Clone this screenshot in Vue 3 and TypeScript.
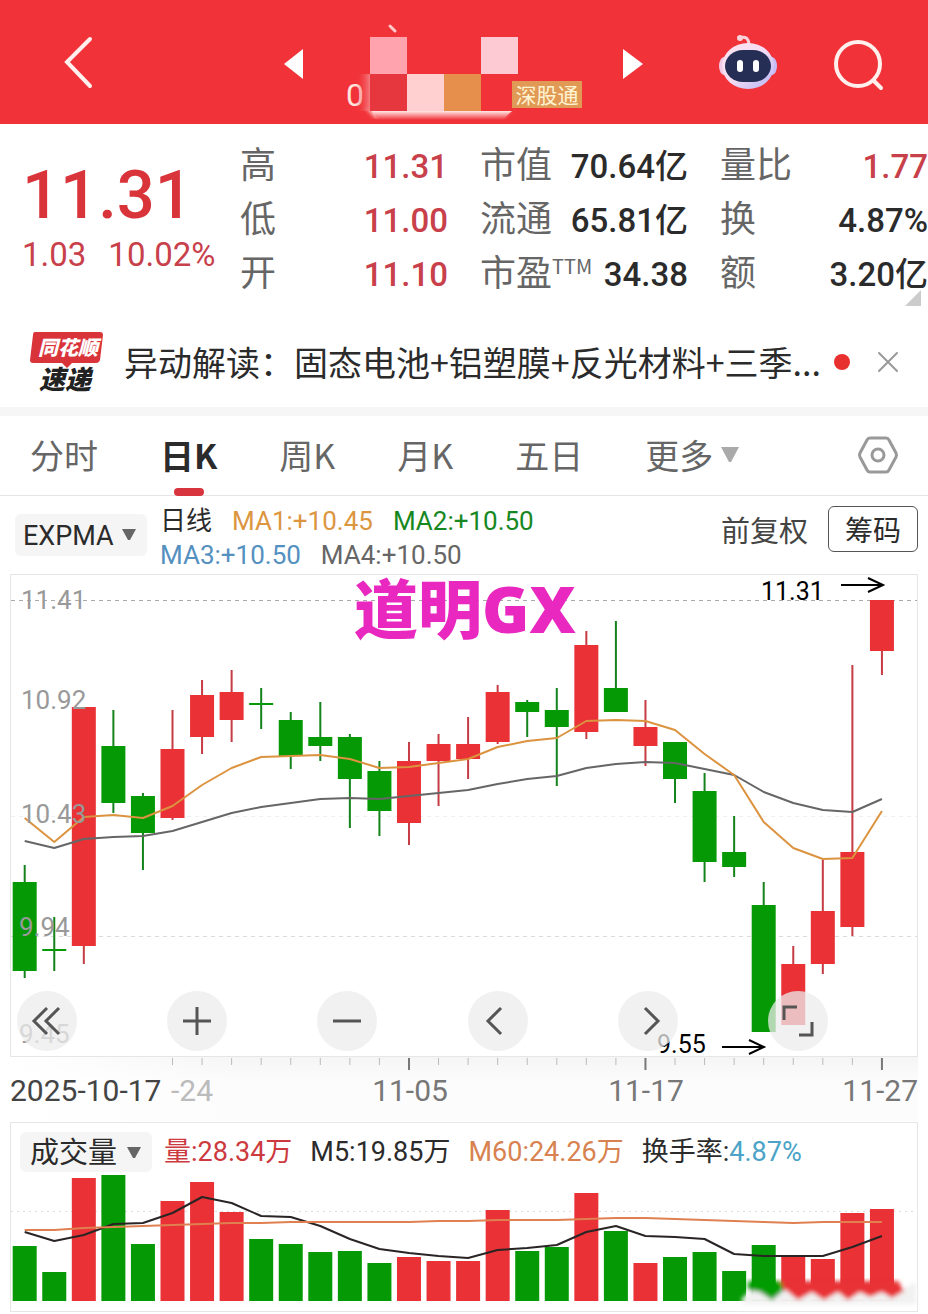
<script setup lang="ts">
import { ref } from 'vue'

type Candle = [dir: 'up' | 'down', high: number, top: number, bottom: number, low: number]

const step = 29.56
const firstX = 24.7
const cx = (i: number): number => firstX + i * step

const candles: Candle[] = [
  ['down', 865, 882, 971, 978],
  ['down', 917, 949, 951, 971],
  ['up', 707, 707, 946, 964],
  ['down', 710, 746, 803, 813],
  ['down', 793, 796, 833, 870],
  ['up', 710, 749, 818, 820],
  ['up', 680, 695, 737, 754],
  ['up', 670, 692, 720, 742],
  ['down', 688, 703, 705, 729],
  ['down', 712, 720, 756, 769],
  ['down', 702, 737, 746, 761],
  ['down', 734, 737, 779, 828],
  ['down', 761, 771, 811, 836],
  ['up', 742, 761, 823, 845],
  ['up', 734, 744, 761, 806],
  ['up', 717, 744, 759, 779],
  ['up', 685, 692, 742, 744],
  ['down', 700, 702, 712, 737],
  ['down', 688, 710, 727, 786],
  ['up', 631, 645, 732, 739],
  ['down', 621, 688, 712, 712],
  ['up', 700, 727, 746, 766],
  ['down', 742, 742, 779, 803],
  ['down', 773, 791, 862, 882],
  ['down', 816, 852, 867, 877],
  ['down', 882, 905, 1032, 1032],
  ['up', 946, 964, 1025, 1025],
  ['up', 860, 911, 964, 974],
  ['up', 665, 852, 927, 936],
  ['up', 600, 600, 651, 675],
]

const fastLine = [818, 842, 817, 815, 818, 806, 785, 768, 757, 756, 755, 759, 768, 767, 763, 759, 747, 741, 738, 721, 720, 721, 730, 754, 775, 822, 848, 859, 858, 811]
const slowLine = [841, 848, 839, 837, 836, 831, 822, 813, 807, 803, 799, 798, 799, 796, 793, 790, 784, 779, 776, 768, 764, 762, 763, 769, 775, 792, 803, 810, 812, 799]

const volumeTops = [1246, 1272, 1178, 1175, 1244, 1201, 1182, 1212, 1239, 1244, 1252, 1251, 1263, 1257, 1261, 1261, 1210, 1251, 1247, 1193, 1231, 1263, 1257, 1252, 1271, 1245, 1256, 1259, 1213, 1209]
const volumeM5 = [1232, 1241, 1235, 1224, 1223, 1213, 1197, 1203, 1216, 1217, 1226, 1239, 1249, 1253, 1256, 1258, 1250, 1248, 1245, 1232, 1226, 1236, 1237, 1239, 1254, 1256, 1256, 1256, 1247, 1236]
const volumeM60 = [1230, 1230, 1228, 1227, 1226, 1225, 1224, 1223, 1223, 1222, 1222, 1222, 1222, 1222, 1221, 1221, 1220, 1220, 1220, 1219, 1218, 1218, 1219, 1220, 1221, 1222, 1223, 1222, 1222, 1222]

const points = (values: number[]): string => values.map((y, i) => `${cx(i)},${y}`).join(' ')

const ticks = Array.from({ length: 25 }, (_, i) => i + 5).map((i) => ({
  x: cx(i),
  major: i === 13 || i === 21 || i === 29,
}))

const stats = [
  [
    { label: '高', value: '11.31', red: true },
    { label: '低', value: '11.00', red: true },
    { label: '开', value: '11.10', red: true },
  ],
  [
    { label: '市值', value: '70.64亿', red: false },
    { label: '流通', value: '65.81亿', red: false },
    { label: '市盈', sup: 'TTM', value: '34.38', red: false },
  ],
  [
    { label: '量比', value: '1.77', red: true },
    { label: '换', value: '4.87%', red: false },
    { label: '额', value: '3.20亿', red: false },
  ],
]

const tabs = ['分时', '日K', '周K', '月K', '五日']
const activeTab = ref('日K')
const indicator = ref('EXPMA')
const subIndicator = ref('成交量')
</script>

<template>
  <main class="page">
    <header class="topbar">
      <button class="icon-btn back" aria-label="返回">
        <svg width="36" height="56" viewBox="0 0 36 56"><path d="M30 5 7 28 30 52" /></svg>
      </button>
      <div class="switcher">
        <button class="icon-btn" aria-label="上一只">
          <svg width="20" height="30" viewBox="0 0 20 30"><path class="solid" d="M1 15 20 0V30Z" /></svg>
        </button>
        <div class="stock">
          <svg class="mosaic" width="164" height="100" viewBox="348 24 164 100">
            <defs>
              <linearGradient id="fade" x1="0" y1="0" x2="0" y2="1">
                <stop offset="0" stop-color="#ffe9e7" />
                <stop offset="1" stop-color="#f13239" />
              </linearGradient>
              <linearGradient id="smear" x1="0" y1="0" x2="1" y2="0">
                <stop offset="0" stop-color="#f13239" stop-opacity="0" />
                <stop offset="1" stop-color="#f47c80" />
              </linearGradient>
              <filter id="soft"><feGaussianBlur stdDeviation="2" /></filter>
            </defs>
            <path class="mark" d="M390 26 395 31" />
            <text class="code" x="346" y="106">0</text>
            <path d="M366 108H512L502 118H376Z" fill="#ffdedb" filter="url(#soft)" />
            <rect x="356" y="74" width="14" height="37" fill="url(#smear)" />
            <rect x="370" y="37" width="37" height="37" fill="#ffa3ae" />
            <rect x="407" y="37" width="74" height="37" fill="#f13239" />
            <rect x="481" y="37" width="37" height="37" fill="#fdc9d2" />
            <rect x="370" y="74" width="37" height="37" fill="#e6373f" />
            <rect x="407" y="74" width="37" height="37" fill="#ffd0cf" />
            <rect x="444" y="74" width="37" height="37" fill="#e68f4c" />
            <rect x="481" y="74" width="33" height="37" fill="#f13239" />
            <path d="M372 111H512L502 120H378Z" fill="url(#fade)" />
          </svg>
          <span class="market">深股通</span>
        </div>
        <button class="icon-btn" aria-label="下一只">
          <svg width="20" height="30" viewBox="0 0 20 30"><path class="solid" d="M20 15 0 0V30Z" /></svg>
        </button>
      </div>
      <button class="icon-btn robot" aria-label="智能助手">
        <svg width="60" height="60" viewBox="0 0 60 60">
          <defs>
            <linearGradient id="shell" x1="0" y1="0" x2="1" y2="1">
              <stop offset="0" stop-color="#ffe3ee" />
              <stop offset=".5" stop-color="#f3dcf4" />
              <stop offset="1" stop-color="#b4b3f5" />
            </linearGradient>
          </defs>
          <path d="M22 6Q30 3 31 12" fill="none" stroke="#f9d3dc" stroke-width="3" />
          <circle cx="22" cy="6" r="3" fill="#f9d3dc" />
          <ellipse cx="6" cy="34" rx="5" ry="9" fill="#f0c9e4" />
          <ellipse cx="54" cy="34" rx="5" ry="9" fill="#c9bdf5" />
          <ellipse cx="30" cy="34" rx="26" ry="23" fill="url(#shell)" />
          <rect x="7" y="18" width="46" height="32" rx="18" fill="#252f55" />
          <rect x="19" y="28" width="6" height="12" rx="3" fill="#fff" />
          <rect x="35" y="28" width="6" height="12" rx="3" fill="#fff" />
        </svg>
      </button>
      <button class="icon-btn search" aria-label="搜索">
        <svg width="50" height="50" viewBox="0 0 50 50">
          <circle cx="23" cy="24" r="22" /><path d="M39 41 46 48" />
        </svg>
      </button>
    </header>

    <section class="quote">
      <div class="price">
        <strong>11.31</strong>
        <p><span>1.03</span><span>10.02%</span></p>
      </div>
      <dl v-for="(group, g) in stats" :key="g" class="stats">
        <div v-for="item in group" :key="item.label">
          <dt>{{ item.label }}<sup v-if="item.sup">{{ item.sup }}</sup></dt>
          <dd :class="{ red: item.red }">{{ item.value }}</dd>
        </div>
      </dl>
      <svg class="corner" width="16" height="16" viewBox="0 0 16 16"><path d="M16 0V16H0Z" fill="#ccc" /></svg>
    </section>

    <section class="news">
      <svg class="brand" width="74" height="62" viewBox="0 0 74 62">
        <path d="M5 1H70Q73 1 73 4L70 29Q69 32 66 32H42L37 37 32 32H3Q0 32 0 29L3 4Q3 1 5 1Z" fill="#da343b" />
        <text x="8" y="24" class="brand-a">同花顺</text>
        <text x="9" y="58" class="brand-b">速递</text>
      </svg>
      <a href="#" class="headline">异动解读：固态电池+铝塑膜+反光材料+三季...</a>
      <span class="dot"></span>
      <button class="icon-btn close" aria-label="关闭">
        <svg width="22" height="22" viewBox="0 0 22 22"><path d="M2 2 20 20M20 2 2 20" /></svg>
      </button>
    </section>

    <nav class="tabs">
      <button v-for="tab in tabs" :key="tab" :class="{ active: tab === activeTab }" @click="activeTab = tab">{{ tab }}</button>
      <button class="more">更多<svg width="18" height="16" viewBox="0 0 18 16"><path d="M0 0H18L10 15H8Z" fill="#aaa" /></svg></button>
      <button class="icon-btn settings" aria-label="设置">
        <svg width="40" height="38" viewBox="0 0 40 38"><path d="M12 2H28Q30 2 31 4L38 17Q39 19 38 21L31 34Q30 36 28 36H12Q10 36 9 34L2 21Q1 19 2 17L9 4Q10 2 12 2Z" /><circle cx="20" cy="19" r="6" /></svg>
      </button>
    </nav>

    <section class="legend">
      <label class="picker">
        <select v-model="indicator" aria-label="主图指标"><option>EXPMA</option></select>
        <svg width="14" height="11" viewBox="0 0 14 11"><path d="M0 0H14L8 11H6Z" fill="#666" /></svg>
      </label>
      <div class="averages">
        <p><span>日线</span><span class="ma1">MA1:+10.45</span><span class="ma2">MA2:+10.50</span></p>
        <p><span class="ma3">MA3:+10.50</span><span class="ma4">MA4:+10.50</span></p>
      </div>
      <button class="adjust">前复权</button>
      <button class="chips">筹码</button>
    </section>

    <section class="chart">
      <svg viewBox="10 574 908 548" role="img" aria-label="日K线图">
        <defs>
          <linearGradient id="axisShade" x1="0" y1="0" x2="0" y2="1">
            <stop offset="0" stop-color="#f5f5f5" />
            <stop offset=".4" stop-color="#fcfcfc" />
            <stop offset="1" stop-color="#fcfcfc" />
          </linearGradient>
          <linearGradient id="axisMask" x1="0" y1="0" x2="1" y2="0">
            <stop offset="0" stop-color="#fff" />
            <stop offset="1" stop-color="#fff" stop-opacity="0" />
          </linearGradient>
        </defs>
        <rect x="10" y="1057" width="908" height="64" fill="url(#axisShade)" />
        <rect x="10" y="1057" width="240" height="64" fill="url(#axisMask)" />
        <rect class="frame" x="10.5" y="574.5" width="907" height="482" />
        <path class="grid strong" d="M11 600.5H917" />
        <path class="grid faint" d="M11 816.5H917" />
        <path class="grid" d="M11 936.5H917" />

        <g v-for="([dir, high, top, bottom, low], i) in candles" :key="i" :class="dir">
          <rect class="wick" :x="cx(i) - 1" :y="high" width="2" :height="low - high" />
          <rect :x="cx(i) - 12" :y="top" width="24" :height="bottom - top" />
        </g>
        <polyline class="slow" :points="points(slowLine)" />
        <polyline class="fast" :points="points(fastLine)" />

        <g class="scale">
          <text x="21" y="609">11.41</text>
          <text x="21" y="709">10.92</text>
          <text x="21" y="823">10.43</text>
          <text x="19" y="936">9.94</text>
          <text x="19" y="1043">9.45</text>
        </g>

        <g class="callout">
          <text x="761" y="600">11.31</text>
          <path d="M841 585H883M868 578 883 585 868 592" />
          <text x="657" y="1053">9.55</text>
          <path d="M722 1047H764M749 1040 764 1047 749 1054" />
        </g>
        <text class="title" x="354" y="633">道明<tspan class="latin">GX</tspan></text>

        <path v-for="t in ticks" :key="t.x" :class="['tick', { major: t.major }]" :d="`M${t.x} 1058V${t.major ? 1070 : 1065}`" />
        <g class="dates">
          <text class="start" x="10" y="1101">2025-10-17</text>
          <text class="ghost" x="171" y="1101">-24</text>
          <text x="410" y="1101" text-anchor="middle">11-05</text>
          <text x="646" y="1101" text-anchor="middle">11-17</text>
          <text x="918" y="1101" text-anchor="end">11-27</text>
        </g>
      </svg>
      <div class="tools">
        <button aria-label="最早"><svg viewBox="0 0 30 30"><path d="M15 2 2 15 15 28M27 2 14 15 27 28" /></svg></button>
        <button aria-label="放大"><svg viewBox="0 0 30 30"><path d="M15 1V29M1 15H29" /></svg></button>
        <button aria-label="缩小"><svg viewBox="0 0 30 30"><path d="M1 15H29" /></svg></button>
        <button aria-label="向左"><svg viewBox="0 0 30 30"><path d="M18 2 5 15 18 28" /></svg></button>
        <button aria-label="向右"><svg viewBox="0 0 30 30"><path d="M12 2 25 15 12 28" /></svg></button>
        <button aria-label="全屏"><svg viewBox="0 0 30 30"><path d="M1 14V1H14M16 29H29V16" /></svg></button>
      </div>
    </section>

    <section class="volume">
      <div class="volume-head">
        <label class="picker">
          <select v-model="subIndicator" aria-label="副图指标"><option>成交量</option></select>
          <svg width="14" height="11" viewBox="0 0 14 11"><path d="M0 0H14L8 11H6Z" fill="#666" /></svg>
        </label>
        <span class="v-now">量:28.34万</span>
        <span>M5:19.85万</span>
        <span class="v-m60">M60:24.26万</span>
        <span>换手率:<b>4.87%</b></span>
      </div>
      <svg viewBox="11 1172 906 139" role="img" aria-label="成交量图">
        <defs><filter id="haze"><feGaussianBlur stdDeviation="2" /></filter></defs>
        <path class="grid dotted" d="M11 1211.5H917" />
        <rect v-for="(y, i) in volumeTops" :key="i" :class="candles[i][0]" :x="cx(i) - 12" :y="y" width="24" :height="1301 - y" />
        <polyline class="m5" :points="points(volumeM5)" />
        <polyline class="m60" :points="points(volumeM60)" />
        <g filter="url(#haze)">
          <path d="M742 1304V1298L752 1290H900L916 1282V1304Z" fill="#f1f1f1" />
          <path d="M748 1281H782L783 1291 772 1300 760 1292 748 1290Z" fill="#059c05" />
          <path d="M780 1281H898L904 1291 892 1298 882 1292 870 1297 860 1292 848 1300 838 1292 824 1300 812 1292 798 1300 786 1290Z" fill="#e83035" />
          <path d="M742 1304 750 1293 762 1295 768 1304Z" fill="#f1f1f1" />
        </g>
      </svg>
    </section>
  </main>
</template>

<style>
body {
  margin: 0;
  background: #fff;
}
</style>

<style scoped>
.page {
  font-family: 'Noto Sans CJK SC', 'Noto Sans', sans-serif;
  color: #2b2b2b;
  background: #fff;
  overflow: hidden;
}
.price,
.stats dd,
.picker,
.averages,
.brand,
.chart,
.code,
.volume-head {
  font-family: Roboto, 'Noto Sans CJK SC', sans-serif;
}
button,
select {
  font: inherit;
  color: inherit;
  border: 0;
  padding: 0;
  margin: 0;
  background: none;
}
p,
dl,
dd {
  margin: 0;
}
svg {
  display: block;
  flex: none;
  overflow: visible;
}
.icon-btn svg {
  fill: none;
  stroke: #fff0ee;
  stroke-width: 4;
  stroke-linecap: round;
}
.icon-btn .solid {
  fill: #fff;
  stroke: none;
}
.topbar {
  display: flex;
  align-items: center;
  height: 124px;
  padding: 0 43px 0 60px;
  box-sizing: border-box;
  background: #f13239;
}
.back {
  margin-right: auto;
}
.switcher {
  display: flex;
  align-items: center;
}
.switcher .icon-btn {
  padding-top: 4px;
}
.stock {
  display: flex;
  align-items: flex-end;
  width: 234px;
  height: 124px;
  margin: 0 41px 0 45px;
}
.mark {
  stroke: #ffc9c9;
  stroke-width: 3;
  stroke-linecap: round;
}
.code {
  font-size: 32px;
  fill: #ffe3df;
}
.market {
  flex: none;
  width: 70px;
  margin-bottom: 16px;
  font-size: 21px;
  line-height: 27px;
  text-align: center;
  color: #fff4d2;
  background: #e09a55;
}
.robot {
  margin: 0 57px 0 75px;
}
.robot svg {
  stroke: none;
}
.topbar > .search {
  padding-top: 6px;
}

.quote {
  position: relative;
  display: grid;
  grid-template-columns: 186px 1fr 1fr 1fr;
  column-gap: 32px;
  padding: 11px 0 23px 22px;
}
.price {
  color: #d8343a;
  white-space: nowrap;
}
.price strong {
  display: block;
  padding-top: 20px;
  font-size: 67px;
  font-weight: 500;
  line-height: 80px;
}
.price p {
  display: flex;
  gap: 22px;
  font-size: 33px;
  line-height: 40px;
  color: #c8404a;
}
.stats > div {
  display: flex;
  align-items: baseline;
  justify-content: space-between;
  height: 54px;
  line-height: 54px;
  white-space: nowrap;
}
.stats dt {
  font-size: 36px;
  color: #666;
}
.stats sup {
  font-size: 20px;
  line-height: 20px;
  vertical-align: 12px;
}
.stats dd {
  font-size: 33px;
  font-weight: 500;
}
.stats .red {
  color: #c8404a;
}
.corner {
  position: absolute;
  right: 7px;
  bottom: 14px;
}

.news {
  display: flex;
  align-items: center;
  height: 84px;
  padding: 0 29px 3px 30px;
  border-bottom: 9px solid #f6f6f6;
}
.headline {
  flex: 1;
  margin-left: 20px;
  overflow: hidden;
  font-size: 34px;
  line-height: 52px;
  white-space: nowrap;
  color: #2b2b2b;
  text-decoration: none;
}
.brand-a,
.brand-b {
  font-size: 20px;
  font-weight: 900;
  font-style: italic;
  fill: #fff;
}
.brand-b {
  font-size: 26px;
  fill: #222;
}
.dot {
  width: 16px;
  height: 16px;
  border-radius: 50%;
  background: #e8302f;
}
.close {
  margin-left: 27px;
}
.close svg {
  stroke: #999;
  stroke-width: 2;
}

.tabs {
  display: flex;
  align-items: center;
  gap: 62px;
  height: 77px;
  padding: 0 30px 2px;
  border-bottom: 1px solid #e6e6e6;
  font-size: 34px;
  color: #666;
}
.tabs button {
  position: relative;
  line-height: 48px;
  white-space: nowrap;
}
.tabs .active {
  font-weight: 700;
  color: #2b2b2b;
}
.tabs .active::after {
  content: '';
  position: absolute;
  left: 50%;
  bottom: -17px;
  width: 30px;
  height: 8px;
  margin-left: -15px;
  border-radius: 4px;
  background: #d8343d;
}
.tabs .more {
  display: flex;
  align-items: center;
  gap: 8px;
}
.settings {
  margin-left: auto;
}
.settings svg {
  stroke: #999;
  stroke-width: 3;
}

.legend {
  display: flex;
  align-items: center;
  height: 78px;
  padding: 0 10px 0 15px;
  white-space: nowrap;
}
.picker {
  position: relative;
  flex: none;
}
.picker select {
  display: block;
  width: 132px;
  height: 42px;
  padding: 2px 0 0 8px;
  border-radius: 6px;
  appearance: none;
  font-size: 27px;
  background: #f5f5f5;
}
.picker svg {
  position: absolute;
  right: 11px;
  top: 15px;
  pointer-events: none;
}
.averages {
  margin: 0 auto 0 13px;
  padding-top: 6px;
  font-size: 26px;
  line-height: 34px;
}
.averages p {
  display: flex;
  gap: 20px;
}
.ma1 {
  color: #dc963f;
}
.ma2 {
  color: #16881f;
}
.ma3 {
  color: #5490c0;
}
.ma4 {
  color: #666;
}
.adjust,
.chips {
  margin-bottom: 12px;
}
.adjust {
  margin-right: 20px;
  font-size: 29px;
  line-height: 44px;
  color: #444;
}
.chips {
  width: 90px;
  height: 46px;
  border: 1px solid #555;
  border-radius: 6px;
  font-size: 28px;
  line-height: 40px;
}

.chart {
  position: relative;
  margin: 0 10px;
}
.chart > svg,
.volume > svg {
  width: 100%;
}
.frame {
  fill: none;
  stroke: #e6e6e6;
}
.grid {
  stroke: #dcdcdc;
  stroke-dasharray: 4 4;
}
.grid.strong {
  stroke: #aaa;
}
.grid.faint {
  stroke: #efefef;
}
.grid.dotted {
  stroke-dasharray: 2 4;
}
.up {
  fill: #e93136;
}
.down {
  fill: #059a05;
}
.up .wick {
  fill: #c63c44;
}
.down .wick {
  fill: #14831b;
}
polyline {
  fill: none;
  stroke-width: 2;
  stroke-linejoin: round;
}
.slow {
  stroke: #666;
}
.fast {
  stroke: #dc933f;
}
.m5 {
  stroke: #2a2424;
}
.m60 {
  stroke: #e08050;
}
.scale {
  font-size: 26px;
  fill: #999;
}
.callout text {
  font-size: 25px;
  fill: #000;
}
.callout path {
  fill: none;
  stroke: #000;
  stroke-width: 2;
}
.title {
  font-size: 64px;
  font-weight: 900;
  fill: #e928c0;
}
.latin {
  font-family: 'Open Sans', Roboto, sans-serif;
  font-weight: 800;
}
.tick {
  stroke: #bbb;
  stroke-width: 1;
}
.tick.major {
  stroke: #777;
  stroke-width: 2;
}
.dates {
  font-size: 30px;
  fill: #777;
}
.dates .start {
  fill: #444;
}
.dates .ghost {
  fill: #bbb;
}
.tools {
  position: absolute;
  left: 7px;
  right: 90px;
  bottom: 71px;
  display: flex;
  justify-content: space-between;
}
.tools button {
  display: flex;
  align-items: center;
  justify-content: center;
  width: 60px;
  height: 60px;
  border-radius: 50%;
  background: rgba(236, 236, 236, 0.75);
}
.tools svg {
  width: 30px;
  height: 30px;
  fill: none;
  stroke: #555;
  stroke-width: 3;
}

.volume {
  margin: 0 10px 3px;
  border: 1px solid #e6e6e6;
}
.volume-head {
  display: flex;
  align-items: center;
  gap: 18px;
  height: 41px;
  padding: 8px 9px 0;
  font-size: 27px;
  line-height: 32px;
  white-space: nowrap;
}
.volume-head .picker {
  margin-right: -6px;
}
.volume-head .picker select {
  height: 40px;
  padding-left: 10px;
  font-size: 29px;
}
.v-now {
  color: #cc3a40;
}
.v-m60 {
  color: #d78250;
}
.volume-head b {
  font-weight: 400;
  color: #4ba3c7;
}
</style>
